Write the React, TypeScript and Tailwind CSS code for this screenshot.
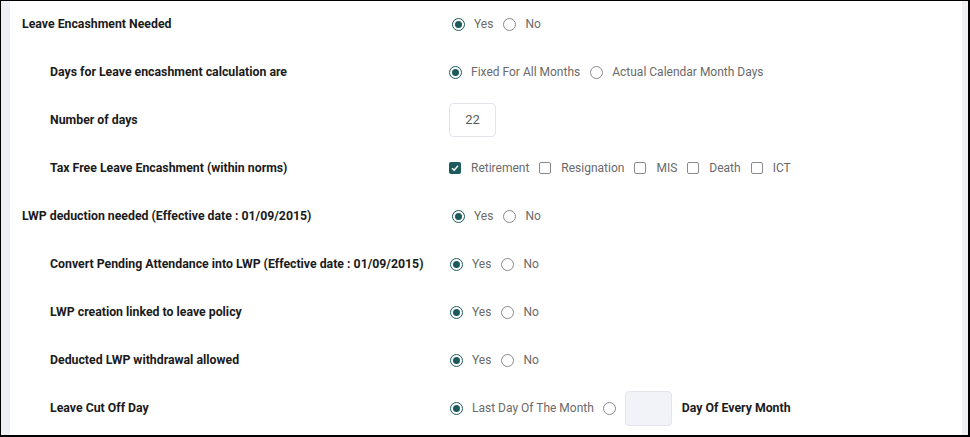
type Opt = { label: string; checked?: boolean };

function Radio({ checked }: { checked?: boolean }) {
  return checked ? (
    <span className="flex h-[13px] w-[13px] shrink-0 items-center justify-center rounded-full border-[1.5px] border-[#1d5a5b]">
      <span className="h-[7px] w-[7px] rounded-full bg-[#1d5a5b]" />
    </span>
  ) : (
    <span className="h-[13px] w-[13px] shrink-0 rounded-full border-[1.5px] border-[#8a8a8a]" />
  );
}

function Check({ checked }: { checked?: boolean }) {
  return checked ? (
    <span className="flex h-[12px] w-[12px] shrink-0 items-center justify-center rounded-[2px] bg-[#1d5a5b]">
      <svg viewBox="0 0 12 12" className="h-[10px] w-[10px]">
        <path d="M2.5 6.2 L5 8.6 L9.6 3.4" fill="none" stroke="#fff" strokeWidth="1.8" />
      </svg>
    </span>
  ) : (
    <span className="h-[12px] w-[12px] shrink-0 rounded-[2px] border-[1.5px] border-[#8a8a8a]" />
  );
}

function RadioGroup({ options, offset = "" }: { options: Opt[]; offset?: string }) {
  return (
    <div className={`flex items-center ${offset}`}>
      {options.map((o) => (
        <label key={o.label} className="mr-[10px] flex items-center gap-[9px]">
          <Radio checked={o.checked} />
          <span>{o.label}</span>
        </label>
      ))}
    </div>
  );
}

function CheckGroup({ options }: { options: Opt[] }) {
  return (
    <div className="flex items-center">
      {options.map((o) => (
        <label key={o.label} className="mr-[10px] flex items-center gap-[10px]">
          <Check checked={o.checked} />
          <span>{o.label}</span>
        </label>
      ))}
    </div>
  );
}

const yesNo: Opt[] = [{ label: "Yes", checked: true }, { label: "No" }];

function Row({ label, sub, children }: { label: string; sub?: boolean; children: React.ReactNode }) {
  return (
    <div className="flex h-12 items-center">
      <div className={`w-[439px] shrink-0 text-[12.3px] font-bold text-[#1b1b1b] ${sub ? "pl-[40px]" : "pl-[12px]"}`}>
        {label}
      </div>
      <div className="text-[12px] text-[#6a6a6a]">{children}</div>
    </div>
  );
}

export default function App() {
  return (
    <div
      className="flex h-[437px] w-[970px] border-t border-l border-r-2 border-b-2 border-black bg-[#eef0f5]"
      style={{ fontFamily: "Roboto, 'Liberation Sans', sans-serif" }}
    >
      <div className="ml-[9px] mr-[6px] flex-1 overflow-hidden bg-white">
        <div className="-mt-px">
          <Row label="Leave Encashment Needed">
            <RadioGroup options={yesNo} offset="ml-[3px]" />
          </Row>
          <Row label="Days for Leave encashment calculation are" sub>
            <RadioGroup options={[{ label: "Fixed For All Months", checked: true }, { label: "Actual Calendar Month Days" }]} />
          </Row>
          <Row label="Number of days" sub>
            <div className="flex h-[34px] w-[47px] items-center justify-center rounded-[4px] border border-[#e3e5ea] text-[13px] text-[#5a5a5a]">
              22
            </div>
          </Row>
          <Row label="Tax Free Leave Encashment (within norms)" sub>
            <CheckGroup
              options={[
                { label: "Retirement", checked: true },
                { label: "Resignation" },
                { label: "MIS" },
                { label: "Death" },
                { label: "ICT" },
              ]}
            />
          </Row>
          <Row label="LWP deduction needed (Effective date : 01/09/2015)">
            <RadioGroup options={yesNo} offset="ml-[3px]" />
          </Row>
          <Row label="Convert Pending Attendance into LWP (Effective date : 01/09/2015)" sub>
            <RadioGroup options={yesNo} offset="ml-[1px]" />
          </Row>
          <Row label="LWP creation linked to leave policy" sub>
            <RadioGroup options={yesNo} offset="ml-[1px]" />
          </Row>
          <Row label="Deducted LWP withdrawal allowed" sub>
            <RadioGroup options={yesNo} offset="ml-[1px]" />
          </Row>
          <Row label="Leave Cut Off Day" sub>
            <div className="ml-[1px] flex items-center">
              <label className="mr-[9px] flex items-center gap-[9px]">
                <Radio checked />
                <span>Last Day Of The Month</span>
              </label>
              <Radio />
              <div className="ml-[9px] h-[35px] w-[47px] rounded-[4px] border border-[#e3e5ea] bg-[#f1f3f8]" />
              <span className="ml-[10px] text-[12.3px] font-bold text-[#1b1b1b]">Day Of Every Month</span>
            </div>
          </Row>
        </div>
      </div>
    </div>
  );
}
